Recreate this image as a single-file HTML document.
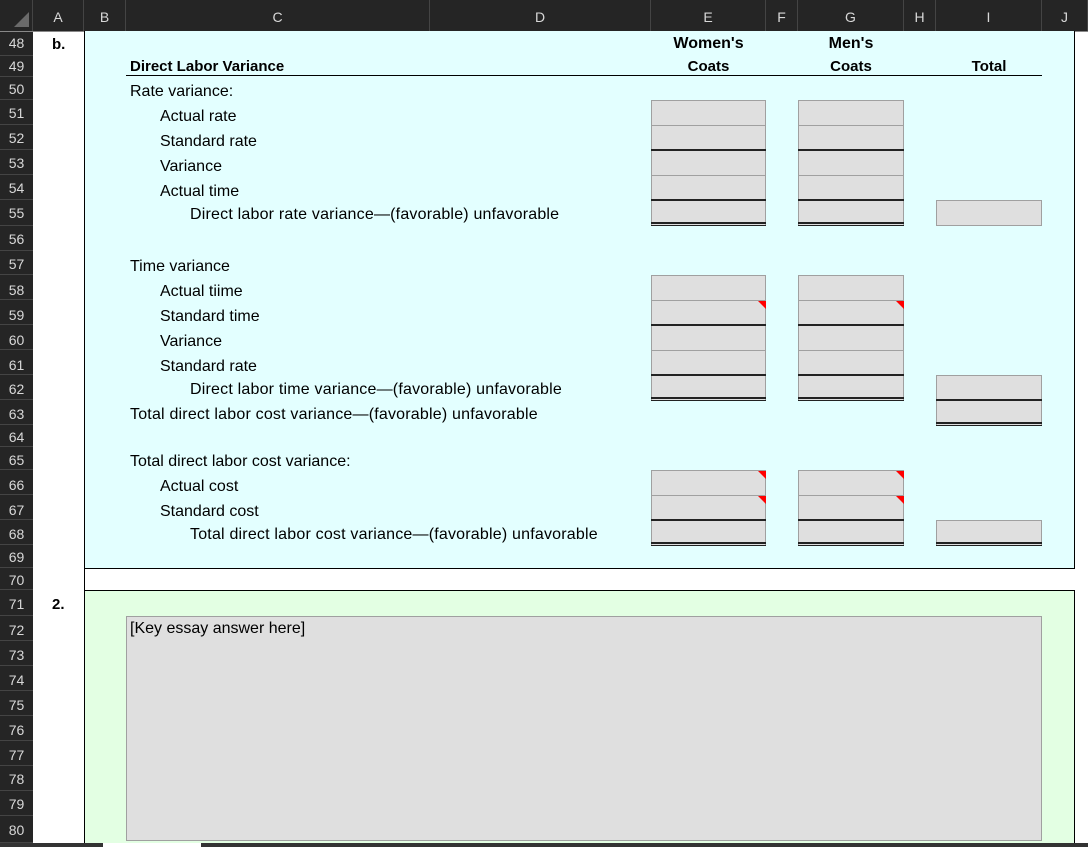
<!DOCTYPE html><html><head><style>
body{margin:0;width:1088px;height:847px;overflow:hidden;background:#fff;font-family:"Liberation Sans",Arial,sans-serif;position:relative}
div{position:absolute;box-sizing:border-box}
.hd{background:#252525}
.rn{left:0;width:33px;color:#d8d8d8;font-size:14px;text-align:center;border-bottom:1px solid #444}
.cl{top:0;height:31px;color:#d8d8d8;font-size:14px;text-align:center;line-height:34px;border-right:1px solid #444}
.t{font-size:16px;color:#000;white-space:nowrap;margin-top:2px}
.b{font-weight:bold;font-size:15px}
.g{background:#dfdfdf;border:1px solid #a0a0a0}
.gl{height:1px;background:#a0a0a0}
.k{height:2px;background:#222}
.d{height:4px;border-top:2px solid #222;border-bottom:1px solid #222}
.r{width:0;height:0;border-top:8px solid #f00;border-left:8px solid transparent}
.w{letter-spacing:0.2px}
</style></head><body>
<div class="hd" style="left:0;top:0;width:1088px;height:31px"></div>
<div class="hd" style="left:0;top:0;width:33px;height:847px"></div>
<div class="cl" style="left:0;width:33px"><span style="position:absolute;left:14px;top:12px;border-bottom:15px solid #6a6a6a;border-left:15px solid transparent"></span></div>
<div class="cl" style="left:33px;width:51px">A</div>
<div class="cl" style="left:84px;width:42px">B</div>
<div class="cl" style="left:126px;width:304px">C</div>
<div class="cl" style="left:430px;width:221px">D</div>
<div class="cl" style="left:651px;width:115px">E</div>
<div class="cl" style="left:766px;width:32px">F</div>
<div class="cl" style="left:798px;width:106px">G</div>
<div class="cl" style="left:904px;width:32px">H</div>
<div class="cl" style="left:936px;width:106px">I</div>
<div class="cl" style="left:1042px;width:46px">J</div>
<div style="left:0;top:31px;width:1088px;height:1px;background:#888"></div>
<div class="rn" style="top:31px;height:25px;line-height:25px">48</div>
<div class="rn" style="top:56px;height:21px;line-height:21px">49</div>
<div class="rn" style="top:77px;height:23px;line-height:25px">50</div>
<div class="rn" style="top:100px;height:25px;line-height:27px">51</div>
<div class="rn" style="top:125px;height:25px;line-height:27px">52</div>
<div class="rn" style="top:150px;height:25px;line-height:27px">53</div>
<div class="rn" style="top:175px;height:25px;line-height:27px">54</div>
<div class="rn" style="top:200px;height:26px;line-height:27px">55</div>
<div class="rn" style="top:226px;height:25px;line-height:27px">56</div>
<div class="rn" style="top:251px;height:24px;line-height:27px">57</div>
<div class="rn" style="top:275px;height:25px;line-height:30px">58</div>
<div class="rn" style="top:300px;height:25px;line-height:30px">59</div>
<div class="rn" style="top:325px;height:25px;line-height:30px">60</div>
<div class="rn" style="top:350px;height:25px;line-height:30px">61</div>
<div class="rn" style="top:375px;height:25px;line-height:28px">62</div>
<div class="rn" style="top:400px;height:25px;line-height:28px">63</div>
<div class="rn" style="top:425px;height:22px;line-height:25px">64</div>
<div class="rn" style="top:447px;height:23px;line-height:27px">65</div>
<div class="rn" style="top:470px;height:25px;line-height:30px">66</div>
<div class="rn" style="top:495px;height:25px;line-height:30px">67</div>
<div class="rn" style="top:520px;height:25px;line-height:28px">68</div>
<div class="rn" style="top:545px;height:23px;line-height:25px">69</div>
<div class="rn" style="top:568px;height:22px;line-height:24px">70</div>
<div class="rn" style="top:590px;height:26px;line-height:28px">71</div>
<div class="rn" style="top:616px;height:25px;line-height:29px">72</div>
<div class="rn" style="top:641px;height:25px;line-height:29px">73</div>
<div class="rn" style="top:666px;height:25px;line-height:29px">74</div>
<div class="rn" style="top:691px;height:25px;line-height:29px">75</div>
<div class="rn" style="top:716px;height:25px;line-height:29px">76</div>
<div class="rn" style="top:741px;height:25px;line-height:29px">77</div>
<div class="rn" style="top:766px;height:25px;line-height:27px">78</div>
<div class="rn" style="top:791px;height:25px;line-height:27px">79</div>
<div class="rn" style="top:816px;height:27px;line-height:29px">80</div>

<div style="left:84px;top:31px;width:991px;height:538px;background:#e3ffff;border-left:1px solid #000;border-right:1px solid #000;border-bottom:1px solid #000"></div>
<div style="left:84px;top:590px;width:991px;height:257px;background:#e3ffe3;border:1px solid #000;border-bottom:none"></div>
<div style="left:84px;top:569px;width:1px;height:21px;background:#000"></div>
<div style="left:0;top:843px;width:1088px;height:4px;background:#333"></div>
<div style="left:103px;top:843px;width:98px;height:4px;background:#fff"></div>
<div class="g" style="left:126px;top:616px;width:916px;height:225px"></div>
<div class="t" style="left:130px;top:618px;font-size:16px">[Key essay answer here]</div>
<div class="t b" style="left:52px;top:34px;font-size:15px">b.</div>
<div class="t b" style="left:52px;top:594px;font-size:15px">2.</div>

<div class="t b" style="left:651px;width:115px;text-align:center;top:33px;font-size:16px">Women's</div>
<div class="t b" style="left:798px;width:106px;text-align:center;top:33px;font-size:16px">Men's</div>
<div class="t b" style="left:130px;top:56px">Direct Labor Variance</div>
<div class="t b" style="left:651px;width:115px;text-align:center;top:56px">Coats</div>
<div class="t b" style="left:798px;width:106px;text-align:center;top:56px">Coats</div>
<div class="t b" style="left:936px;width:106px;text-align:center;top:56px">Total</div>
<div style="left:126px;top:75px;width:916px;height:1px;background:#000"></div>

<div class="t" style="left:130px;top:81px">Rate variance:</div>
<div class="t" style="left:160px;top:106px">Actual rate</div>
<div class="t" style="left:160px;top:131px">Standard rate</div>
<div class="t" style="left:160px;top:156px">Variance</div>
<div class="t" style="left:160px;top:181px">Actual time</div>
<div class="t w" style="left:190px;top:204px">Direct labor rate variance—(favorable) unfavorable</div>
<div class="t" style="left:130px;top:256px">Time variance</div>
<div class="t" style="left:160px;top:281px">Actual tiime</div>
<div class="t" style="left:160px;top:306px">Standard time</div>
<div class="t" style="left:160px;top:331px">Variance</div>
<div class="t" style="left:160px;top:356px">Standard rate</div>
<div class="t w" style="left:190px;top:379px">Direct labor time variance—(favorable) unfavorable</div>
<div class="t w" style="left:130px;top:404px">Total direct labor cost variance—(favorable) unfavorable</div>
<div class="t" style="left:130px;top:451px">Total direct labor cost variance:</div>
<div class="t" style="left:160px;top:476px">Actual cost</div>
<div class="t" style="left:160px;top:501px">Standard cost</div>
<div class="t w" style="left:190px;top:524px">Total direct labor cost variance—(favorable) unfavorable</div>

<div class="g" style="left:651px;top:100px;width:115px;height:126px"></div>
<div class="g" style="left:798px;top:100px;width:106px;height:126px"></div>
<div class="gl" style="left:651px;top:125px;width:115px"></div><div class="gl" style="left:798px;top:125px;width:106px"></div>
<div class="k" style="left:651px;top:149px;width:115px"></div><div class="k" style="left:798px;top:149px;width:106px"></div>
<div class="gl" style="left:651px;top:175px;width:115px"></div><div class="gl" style="left:798px;top:175px;width:106px"></div>
<div class="k" style="left:651px;top:199px;width:115px"></div><div class="k" style="left:798px;top:199px;width:106px"></div>
<div class="d" style="left:651px;top:222px;width:115px"></div><div class="d" style="left:798px;top:222px;width:106px"></div>
<div class="g" style="left:936px;top:200px;width:106px;height:26px"></div>

<div class="g" style="left:651px;top:275px;width:115px;height:126px"></div>
<div class="g" style="left:798px;top:275px;width:106px;height:126px"></div>
<div class="gl" style="left:651px;top:300px;width:115px"></div><div class="gl" style="left:798px;top:300px;width:106px"></div>
<div class="k" style="left:651px;top:324px;width:115px"></div><div class="k" style="left:798px;top:324px;width:106px"></div>
<div class="gl" style="left:651px;top:350px;width:115px"></div><div class="gl" style="left:798px;top:350px;width:106px"></div>
<div class="k" style="left:651px;top:374px;width:115px"></div><div class="k" style="left:798px;top:374px;width:106px"></div>
<div class="d" style="left:651px;top:397px;width:115px"></div><div class="d" style="left:798px;top:397px;width:106px"></div>
<div class="r" style="left:758px;top:301px"></div><div class="r" style="left:896px;top:301px"></div>
<div class="g" style="left:936px;top:375px;width:106px;height:51px"></div>
<div class="k" style="left:936px;top:399px;width:106px"></div>
<div class="d" style="left:936px;top:422px;width:106px"></div>

<div class="g" style="left:651px;top:470px;width:115px;height:76px"></div>
<div class="g" style="left:798px;top:470px;width:106px;height:76px"></div>
<div class="gl" style="left:651px;top:495px;width:115px"></div><div class="gl" style="left:798px;top:495px;width:106px"></div>
<div class="k" style="left:651px;top:519px;width:115px"></div><div class="k" style="left:798px;top:519px;width:106px"></div>
<div class="d" style="left:651px;top:542px;width:115px"></div><div class="d" style="left:798px;top:542px;width:106px"></div>
<div class="r" style="left:758px;top:471px"></div><div class="r" style="left:896px;top:471px"></div>
<div class="r" style="left:758px;top:496px"></div><div class="r" style="left:896px;top:496px"></div>
<div class="g" style="left:936px;top:520px;width:106px;height:26px"></div>
<div class="d" style="left:936px;top:542px;width:106px"></div>
</body></html>
